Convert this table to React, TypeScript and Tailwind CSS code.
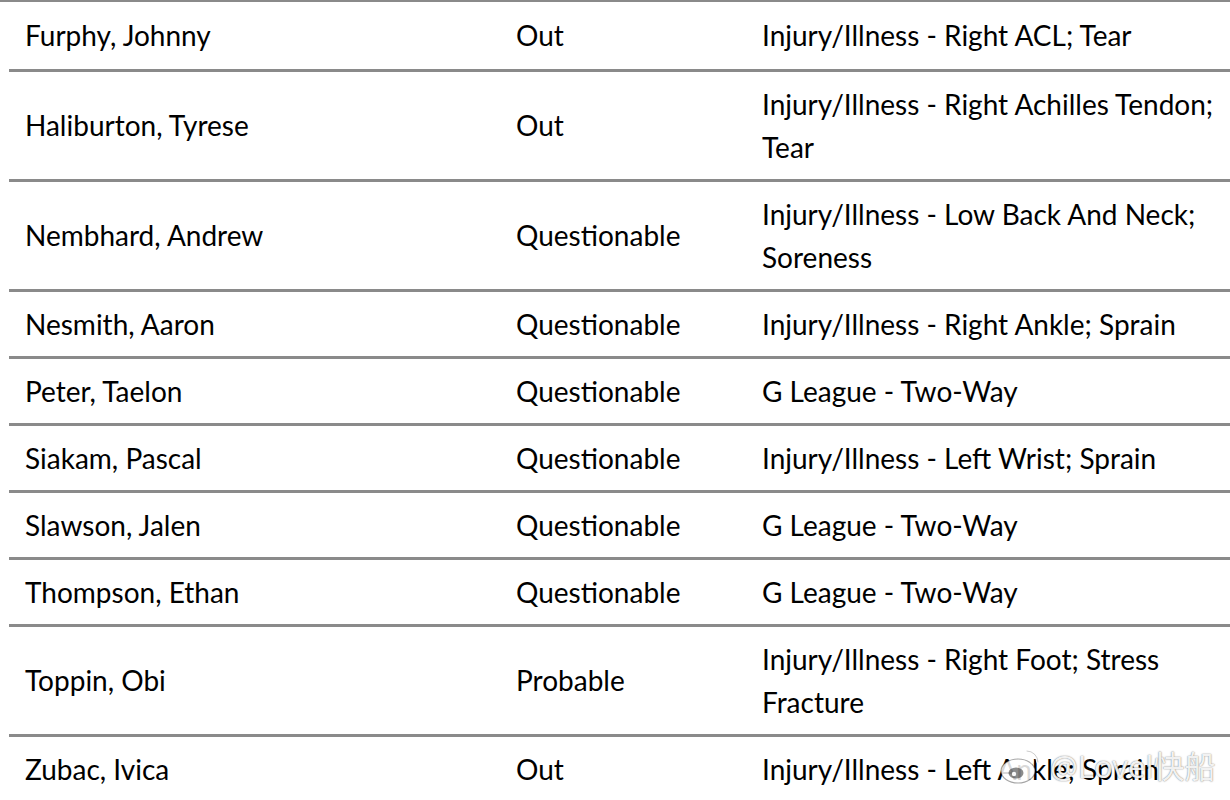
import React from "react";

const rows: { name: string; status: string; reason: string[] }[] = [
  { name: "Furphy, Johnny", status: "Out", reason: ["Injury/Illness - Right ACL; Tear"] },
  { name: "Haliburton, Tyrese", status: "Out", reason: ["Injury/Illness - Right Achilles Tendon;", "Tear"] },
  { name: "Nembhard, Andrew", status: "Questionable", reason: ["Injury/Illness - Low Back And Neck;", "Soreness"] },
  { name: "Nesmith, Aaron", status: "Questionable", reason: ["Injury/Illness - Right Ankle; Sprain"] },
  { name: "Peter, Taelon", status: "Questionable", reason: ["G League - Two-Way"] },
  { name: "Siakam, Pascal", status: "Questionable", reason: ["Injury/Illness - Left Wrist; Sprain"] },
  { name: "Slawson, Jalen", status: "Questionable", reason: ["G League - Two-Way"] },
  { name: "Thompson, Ethan", status: "Questionable", reason: ["G League - Two-Way"] },
  { name: "Toppin, Obi", status: "Probable", reason: ["Injury/Illness - Right Foot; Stress", "Fracture"] },
  { name: "Zubac, Ivica", status: "Out", reason: ["Injury/Illness - Left Ankle; Sprain"] },
];

export default function App() {
  return (
    <div
      className="relative w-[1230px] h-[800px] overflow-hidden bg-white text-black text-[28px] leading-[43px]"
      style={{ fontFamily: "Lato, 'Liberation Sans', sans-serif" }}
    >
      <div className="h-[2px] bg-[#8a8a8a]" />
      <div className="ml-[9px]">
        {rows.map((r, i) => (
          <div
            key={r.name}
            className={
              "flex items-center " +
              (i === 0 ? "" : "border-t-[3px] border-[#8a8a8a] ") +
              (r.reason.length > 1 ? "h-[110px]" : "h-[67px]")
            }
          >
            <div className="w-[491px] pl-[16px] whitespace-nowrap">{r.name}</div>
            <div className="w-[246px] pl-[16px] whitespace-nowrap">{r.status}</div>
            <div className="flex-1 pl-[16px] whitespace-nowrap">
              {r.reason.map((l) => (
                <div key={l}>{l}</div>
              ))}
            </div>
          </div>
        ))}
      </div>
      <div
        className="absolute left-[998px] top-[746px] flex items-center gap-[8px] whitespace-nowrap text-white/90 text-[31px] leading-none"
        style={{
          fontFamily: "'Noto Sans', 'Noto Sans CJK SC', sans-serif",
          textShadow: "0 0 1px rgba(0,0,0,0.45), 0 0 2px rgba(0,0,0,0.25)",
        }}
      >
        <svg width="44" height="40" viewBox="0 0 44 40" fill="none">
          <ellipse cx="20" cy="25" rx="17" ry="12" fill="rgba(255,255,255,0.85)" stroke="rgba(0,0,0,0.35)" strokeWidth="1.2" />
          <ellipse cx="18" cy="27" rx="7.5" ry="5.5" fill="rgba(0,0,0,0.45)" />
          <circle cx="16" cy="28" r="2.2" fill="rgba(255,255,255,0.95)" />
          <path d="M29 5 a11 11 0 0 1 11 11" stroke="rgba(255,255,255,0.9)" strokeWidth="3.5" strokeLinecap="round" />
          <path d="M29 5 a11 11 0 0 1 11 11" stroke="rgba(0,0,0,0.2)" strokeWidth="1" strokeLinecap="round" />
          <path d="M29 11 a5 5 0 0 1 5 5" stroke="rgba(255,255,255,0.9)" strokeWidth="3" strokeLinecap="round" />
        </svg>
        <span>@Lovel快船</span>
      </div>
    </div>
  );
}
